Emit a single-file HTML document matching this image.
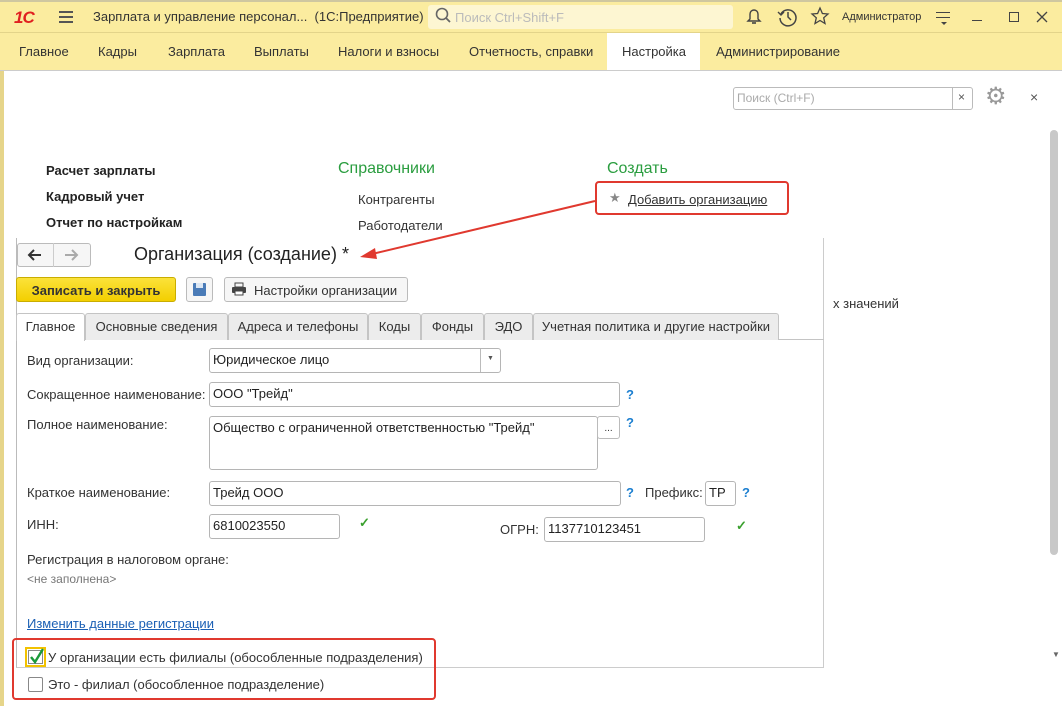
<!DOCTYPE html>
<html><head><meta charset="utf-8"><style>
*{margin:0;padding:0;box-sizing:border-box}
body{width:1062px;height:706px;overflow:hidden;position:relative;background:#fff;font-family:"Liberation Sans",Arial,sans-serif;font-size:13px;color:#333}
.a{position:absolute;white-space:nowrap}
.inp{position:absolute;border:1px solid #b5b5b5;border-radius:3px;background:#fff;padding:3px 3px;font-size:13px;color:#222}
.tab{position:absolute;top:313px;height:27px;border:1px solid #c4c4c4;border-bottom:none;background:#ececec;border-radius:3px 3px 0 0;padding-top:5px;text-align:center;color:#333}
.q{position:absolute;color:#1c7fd0;font-weight:bold;font-size:13px}
.ck{position:absolute;color:#3aa02e;font-size:13px;font-weight:bold}
</style></head><body>
<!-- title bar -->
<div class="a" style="left:0;top:0;width:1062px;height:70px;background:#fbec9f"></div>
<div class="a" style="left:0;top:0;width:1062px;height:2px;background:#cfc7a0"></div>
<div class="a" style="left:0;top:32px;width:1062px;height:1px;background:#e3d48a"></div>
<div class="a" style="left:14px;top:8px;font-size:17px;font-weight:bold;color:#e02020;letter-spacing:-1px;font-style:italic">1С</div>
<div class="a" style="left:59px;top:11px;width:14px;height:2px;background:#555;box-shadow:0 5px 0 #555,0 10px 0 #555"></div>
<div class="a" style="left:93px;top:9px;color:#333">Зарплата и управление персонал...&nbsp;&nbsp;(1С:Предприятие)</div>
<div class="a" style="left:428px;top:5px;width:305px;height:24px;background:#fdf6d2;border-radius:3px"></div>
<svg class="a" style="left:435px;top:7px" width="18" height="18"><circle cx="7" cy="7" r="5.5" fill="none" stroke="#666" stroke-width="1.6"/><line x1="11" y1="11" x2="15" y2="15" stroke="#666" stroke-width="1.8"/></svg>
<div class="a" style="left:455px;top:10px;color:#bbb">Поиск Ctrl+Shift+F</div>
<svg class="a" style="left:744px;top:6px" width="20" height="22"><path d="M4 15 L6 13 L6 8 A4 4 0 0 1 14 8 L14 13 L16 15 Z" fill="none" stroke="#444" stroke-width="1.4"/><path d="M8 17 h4" stroke="#444" stroke-width="1.6"/></svg>
<svg class="a" style="left:777px;top:6px" width="22" height="22"><path d="M4 8 A8 8 0 1 1 3 12" fill="none" stroke="#444" stroke-width="1.5"/><path d="M1 6 L4 9 L7 6" fill="none" stroke="#444" stroke-width="1.4"/><path d="M11 6 V11 L14 14" fill="none" stroke="#444" stroke-width="1.5"/></svg>
<svg class="a" style="left:810px;top:6px" width="20" height="20"><polygon points="10,2 12.4,7.5 18,8 13.7,11.8 15,17.5 10,14.5 5,17.5 6.3,11.8 2,8 7.6,7.5" fill="none" stroke="#444" stroke-width="1.3"/></svg>
<div class="a" style="left:842px;top:11px;font-size:11px;color:#333">Администратор</div>
<div class="a" style="left:936px;top:12px;width:14px;height:1px;background:#444;box-shadow:0 5px 0 #444"></div>
<div class="a" style="left:941px;top:22px;width:0;height:0;border-left:3px solid transparent;border-right:3px solid transparent;border-top:3px solid #444"></div>
<div class="a" style="left:972px;top:20px;width:10px;height:1px;background:#444"></div>
<div class="a" style="left:1009px;top:12px;width:10px;height:10px;border:1px solid #444"></div>
<svg class="a" style="left:1036px;top:11px" width="12" height="12"><path d="M1 1 L11 11 M11 1 L1 11" stroke="#444" stroke-width="1.3"/></svg>
<!-- nav -->
<div class="a" style="left:607px;top:33px;width:93px;height:37px;background:#fff"></div>
<div class="a" style="left:19px;top:44px">Главное</div>
<div class="a" style="left:98px;top:44px">Кадры</div>
<div class="a" style="left:168px;top:44px">Зарплата</div>
<div class="a" style="left:254px;top:44px">Выплаты</div>
<div class="a" style="left:338px;top:44px">Налоги и взносы</div>
<div class="a" style="left:469px;top:44px">Отчетность, справки</div>
<div class="a" style="left:622px;top:44px">Настройка</div>
<div class="a" style="left:716px;top:44px">Администрирование</div>
<div class="a" style="left:0;top:70px;width:4px;height:636px;background:#e6d58a"></div>
<div class="a" style="left:0;top:70px;width:1062px;height:1px;background:#ccc"></div>
<!-- search -->
<div class="a" style="left:733px;top:87px;width:240px;height:23px;border:1px solid #bbb;border-radius:3px"></div>
<div class="a" style="left:952px;top:87px;width:1px;height:23px;background:#bbb"></div>
<div class="a" style="left:737px;top:91px;color:#aaa;font-size:12px">Поиск (Ctrl+F)</div>
<div class="a" style="left:958px;top:90px;font-size:12px;color:#555">×</div>
<div class="a" style="left:985px;top:82px;font-size:24px;color:#999">⚙</div>
<div class="a" style="left:1030px;top:89px;font-size:14px;color:#555">×</div>
<!-- scrollbar -->
<div class="a" style="left:1050px;top:130px;width:8px;height:425px;background:#c8c8c8;border-radius:4px"></div>
<div class="a" style="left:1052px;top:650px;font-size:8px;color:#666">▼</div>
<!-- background page -->
<div class="a" style="left:46px;top:163px;font-weight:bold;color:#222">Расчет зарплаты</div>
<div class="a" style="left:46px;top:189px;font-weight:bold;color:#222">Кадровый учет</div>
<div class="a" style="left:46px;top:215px;font-weight:bold;color:#222">Отчет по настройкам</div>
<div class="a" style="left:338px;top:160px;font-size:16px;color:#2a9d3f">Справочники</div>
<div class="a" style="left:607px;top:160px;font-size:16px;color:#2a9d3f">Создать</div>
<div class="a" style="left:358px;top:192px;color:#333">Контрагенты</div>
<div class="a" style="left:358px;top:218px;color:#333">Работодатели</div>
<div class="a" style="left:595px;top:181px;width:194px;height:34px;border:2px solid #e0392f;border-radius:4px"></div>
<div class="a" style="left:609px;top:190px;color:#888">★</div>
<div class="a" style="left:628px;top:192px;color:#333;text-decoration:underline">Добавить организацию</div>
<div class="a" style="left:833px;top:296px;color:#333">х значений</div>
<!-- form -->
<div class="a" style="left:16px;top:238px;width:808px;height:430px;background:#fff;border-left:1px solid #bbb;border-right:1px solid #ccc;border-bottom:1px solid #ccc"></div>
<div class="a" style="left:17px;top:243px;width:74px;height:24px;border:1px solid #bbb;border-radius:3px;background:#f6f6f6"></div>
<div class="a" style="left:53px;top:243px;width:1px;height:24px;background:#ccc"></div>
<svg class="a" style="left:27px;top:248px" width="16" height="14"><path d="M2 7 H14 M7 2 L2 7 L7 12" fill="none" stroke="#333" stroke-width="2"/></svg>
<svg class="a" style="left:63px;top:248px" width="16" height="14"><path d="M2 7 H14 M9 2 L14 7 L9 12" fill="none" stroke="#aaa" stroke-width="2"/></svg>
<div class="a" style="left:134px;top:244px;font-size:18px;color:#222">Организация (создание) *</div>
<svg class="a" style="left:0;top:0" width="1062" height="706"><line x1="595" y1="201" x2="372" y2="254" stroke="#e0392f" stroke-width="2"/><polygon points="360,257 375,248 377,259" fill="#e0392f"/></svg>
<div class="a" style="left:16px;top:277px;width:160px;height:25px;background:linear-gradient(#fbe23a,#f3cf00);border:1px solid #c9ad00;border-radius:3px;font-weight:bold;color:#333;text-align:center;padding-top:5px">Записать и закрыть</div>
<div class="a" style="left:186px;top:277px;width:27px;height:25px;border:1px solid #bbb;border-radius:3px;background:#f6f6f6"></div>
<div class="a" style="left:193px;top:283px;width:13px;height:13px;background:#4a7bb7;border-radius:1px"></div>
<div class="a" style="left:196px;top:283px;width:7px;height:5px;background:#dbe6f3"></div>
<div class="a" style="left:224px;top:277px;width:184px;height:25px;border:1px solid #bbb;border-radius:3px;background:#f6f6f6"></div>
<svg class="a" style="left:231px;top:282px" width="16" height="14"><rect x="4" y="1" width="8" height="4" fill="none" stroke="#444"/><rect x="1" y="5" width="14" height="6" rx="1" fill="#444"/><rect x="4" y="9" width="8" height="4" fill="#fff" stroke="#444"/></svg>
<div class="a" style="left:254px;top:283px;color:#333">Настройки организации</div>
<!-- tabs -->
<div class="a" style="left:16px;top:339px;width:808px;height:1px;background:#c4c4c4"></div>
<div class="tab" style="left:16px;width:69px;background:#fff;height:28px">Главное</div>
<div class="tab" style="left:85px;width:143px">Основные сведения</div>
<div class="tab" style="left:228px;width:140px">Адреса и телефоны</div>
<div class="tab" style="left:368px;width:53px">Коды</div>
<div class="tab" style="left:421px;width:63px">Фонды</div>
<div class="tab" style="left:484px;width:49px">ЭДО</div>
<div class="tab" style="left:533px;width:246px">Учетная политика и другие настройки</div>
<!-- fields -->
<div class="a" style="left:27px;top:353px">Вид организации:</div>
<div class="inp" style="left:209px;top:348px;width:292px;height:25px">Юридическое лицо</div>
<div class="a" style="left:480px;top:349px;width:1px;height:23px;background:#bbb"></div>
<div class="a" style="left:487px;top:355px;font-size:7px;color:#555">▼</div>
<div class="a" style="left:27px;top:387px">Сокращенное наименование:</div>
<div class="inp" style="left:209px;top:382px;width:411px;height:25px">ООО "Трейд"</div>
<div class="q" style="left:626px;top:387px">?</div>
<div class="a" style="left:27px;top:417px">Полное наименование:</div>
<div class="inp" style="left:209px;top:416px;width:389px;height:54px">Общество с ограниченной ответственностью "Трейд"</div>
<div class="a" style="left:597px;top:416px;width:23px;height:23px;border:1px solid #bbb;border-radius:3px;text-align:center;font-size:10px;padding-top:6px">...</div>
<div class="q" style="left:626px;top:415px">?</div>
<div class="a" style="left:27px;top:485px">Краткое наименование:</div>
<div class="inp" style="left:209px;top:481px;width:412px;height:25px">Трейд ООО</div>
<div class="q" style="left:626px;top:485px">?</div>
<div class="a" style="left:645px;top:485px">Префикс:</div>
<div class="inp" style="left:705px;top:481px;width:31px;height:25px">ТР</div>
<div class="q" style="left:742px;top:485px">?</div>
<div class="a" style="left:27px;top:517px">ИНН:</div>
<div class="inp" style="left:209px;top:514px;width:131px;height:25px">6810023550</div>
<div class="ck" style="left:359px;top:515px">✓</div>
<div class="a" style="left:500px;top:522px">ОГРН:</div>
<div class="inp" style="left:544px;top:517px;width:161px;height:25px">1137710123451</div>
<div class="ck" style="left:736px;top:518px">✓</div>
<div class="a" style="left:27px;top:552px">Регистрация в налоговом органе:</div>
<div class="a" style="left:27px;top:572px;color:#777;font-size:12px">&lt;не заполнена&gt;</div>
<div class="a" style="left:27px;top:616px;color:#1a5fb4;text-decoration:underline">Изменить данные регистрации</div>
<div class="a" style="left:12px;top:638px;width:424px;height:62px;border:2px solid #e0392f;border-radius:4px"></div>
<div class="a" style="left:25px;top:647px;width:21px;height:20px;border:2px solid #f2c200"></div>
<div class="a" style="left:28px;top:650px;width:15px;height:14px;border:1px solid #888;background:#fff"></div>
<svg class="a" style="left:28px;top:647px" width="18" height="18"><path d="M3 10 L7 15 L15 2" fill="none" stroke="#1a9a3a" stroke-width="2.4"/></svg>
<div class="a" style="left:48px;top:650px">У организации есть филиалы (обособленные подразделения)</div>
<div class="a" style="left:28px;top:677px;width:15px;height:15px;border:1px solid #888;border-radius:2px"></div>
<div class="a" style="left:48px;top:677px">Это - филиал (обособленное подразделение)</div>
</body></html>
